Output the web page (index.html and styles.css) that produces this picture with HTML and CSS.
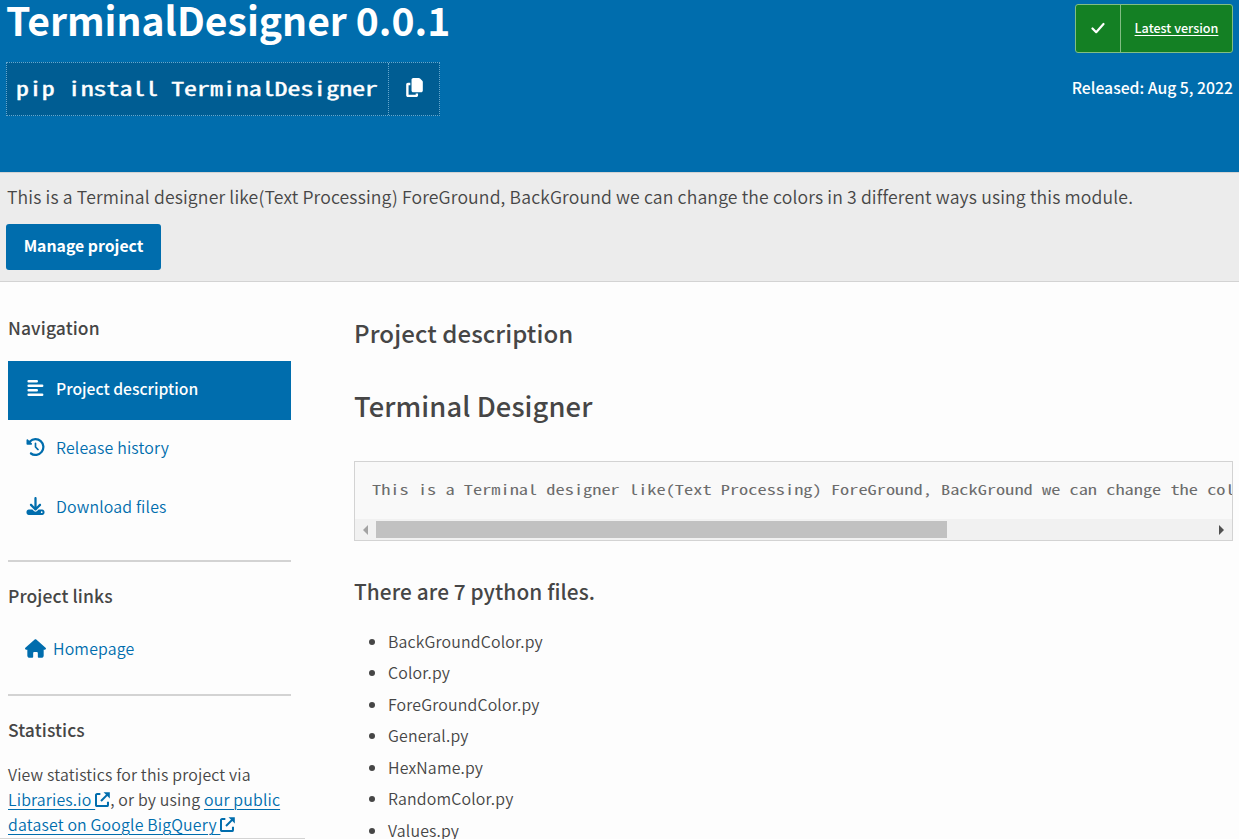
FILE: index.html
```html
<!DOCTYPE html>
<html lang="en">
<head>
<meta charset="utf-8">
<title>TerminalDesigner</title>
<link rel="stylesheet" href="styles.css">
</head>
<body>
<header class="banner">
  <div class="banner-main">
    <h1 class="package-name"><span>TerminalDesigner 0.0.1</span></h1>
    <div class="pip">
      <code class="pip-command"><span class="wide">pip install TerminalDesigner</span></code>
      <button class="pip-copy" aria-label="Copy">
        <svg class="icon-copy" viewBox="0 0 512 512"><path d="M224 0h147c13 0 25 5 34 14l61 61c9 9 14 21 14 34v227c0 27-21 48-48 48H224c-27 0-48-21-48-48V48c0-27 21-48 48-48zM80 128h64v64H96v256h192v-32h64v48c0 27-21 48-48 48H80c-27 0-48-21-48-48V176c0-27 21-48 48-48z"/></svg>
      </button>
    </div>
  </div>
  <div class="banner-side">
    <a class="status"><span class="status-check"><svg class="icon-check" viewBox="0 0 14 12"><path d="M1.5 6.5l3.7 3.7L12.5 2"/></svg></span><span class="status-label"><span>Latest version</span></span></a>
    <p class="released"><span>Released: Aug 5, 2022</span></p>
  </div>
</header>
<section class="summary">
  <p class="summary-text"><span>This is a Terminal designer like(Text Processing) ForeGround, BackGround we can change the colors in 3 different ways using this module.</span></p>
  <a class="manage"><span>Manage project</span></a>
</section>
<div class="content">
  <aside class="sidebar">
    <h2 class="side-title nav-title"><span>Navigation</span></h2>
    <nav class="tabs">
      <a class="tab tab-active"><svg class="icon" viewBox="0 0 20 20"><path class="stroke" d="M2.4 2.6h9M2.4 7.6h15M2.4 12.6h9M2.4 17.6h15"/></svg><span>Project description</span></a>
      <a class="tab"><svg class="icon" viewBox="0 0 512 512"><path d="M75 75L41 41C26 26 0 37 0 58v110c0 13 11 24 24 24h110c21 0 32-26 17-41l-31-31a192 192 0 1 1 26 293c-14-10-34-7-45 8s-7 34 8 45A256 256 0 1 0 75 75zm181 53c-13 0-24 11-24 24v104c0 6 3 13 7 17l72 72c9 9 25 9 34 0s9-25 0-34l-65-65v-94c0-13-11-24-24-24z"/></svg><span>Release history</span></a>
      <a class="tab"><svg class="icon" viewBox="0 0 512 512"><path d="M288 32c0-18-14-32-32-32s-32 14-32 32v243l-73-74c-13-12-33-12-46 0s-12 33 0 46l128 128c13 12 33 12 46 0l128-128c12-13 12-33 0-46s-33-12-46 0l-73 74V32zM64 352c-35 0-64 29-64 64v32c0 35 29 64 64 64h384c35 0 64-29 64-64v-32c0-35-29-64-64-64H346l-45 45a64 64 0 0 1-90 0l-45-45H64zm368 56a24 24 0 1 1 0 48 24 24 0 0 1 0-48z"/></svg><span>Download files</span></a>
    </nav>
    <hr class="rule">
    <h2 class="side-title"><span>Project links</span></h2>
    <a class="home"><svg class="icon-home" viewBox="0 0 576 512"><path d="M576 256c0 18-15 32-32 32h-32l1 160c0 36-28 64-64 64h-65c-18 0-32-14-32-32v-96c0-18-14-32-32-32h-64c-18 0-32 14-32 32v96c0 18-14 32-32 32h-64c-36 0-64-28-64-64V288H32c-18 0-32-14-32-32 0-9 3-17 10-24L266 8c7-7 15-8 22-8s15 2 21 7l255 225c8 7 12 15 12 24z"/></svg><span>Homepage</span></a>
    <hr class="rule">
    <h2 class="side-title"><span>Statistics</span></h2>
    <p class="stats">
      <span class="stats-line"><span>View statistics for this project via</span></span>
      <span class="stats-line"><a class="link">Libraries.io <svg class="icon-ext" viewBox="0 0 14 14"><path d="M5 1.9H1.9a1 1 0 0 0-1 1v9.2a1 1 0 0 0 1 1h9.2a1 1 0 0 0 1-1V9M5.6 8.4L12 2"/><path class="fill" d="M8 .2h5.8V6z"/></svg></a>, or by using <a class="link">our public</a></span>
      <span class="stats-line"><a class="link">dataset on Google BigQuery <svg class="icon-ext" viewBox="0 0 14 14"><path d="M5 1.9H1.9a1 1 0 0 0-1 1v9.2a1 1 0 0 0 1 1h9.2a1 1 0 0 0 1-1V9M5.6 8.4L12 2"/><path class="fill" d="M8 .2h5.8V6z"/></svg></a></span>
    </p>
  </aside>
  <main class="description">
    <h2 class="page-title"><span>Project description</span></h2>
    <h1 class="readme-title"><span>Terminal Designer</span></h1>
    <div class="code-box">
      <pre class="code"><span class="wide">This is a Terminal designer like(Text Processing) ForeGround, BackGround we can change the colors in 3 different ways</span></pre>
      <div class="scrollbar"><span class="arrow arrow-left"></span><span class="track"><span class="thumb"></span></span><span class="arrow arrow-right"></span></div>
    </div>
    <h2 class="files-title"><span>There are 7 python files.</span></h2>
    <ul class="files">
      <li>BackGroundColor.py</li>
      <li>Color.py</li>
      <li>ForeGroundColor.py</li>
      <li>General.py</li>
      <li>HexName.py</li>
      <li>RandomColor.py</li>
      <li>Values.py</li>
    </ul>
  </main>
</div>
<div class="statusbar"></div>
</body>
</html>
```
FILE: styles.css
```css
* { box-sizing: border-box; margin: 0; padding: 0; }
body {
  width: 1239px; height: 839px; overflow: hidden;
  background: #fdfdfd; color: #464646;
  font: 350 15.9px/25px "Noto Sans CJK SC", "Open Sans", sans-serif;
  letter-spacing: 0.16px;
  display: flex; flex-direction: column;
}
span { white-space: pre; }
svg { flex: none; fill: currentColor; }
.banner {
  height: 172px; flex: none; padding: 0 6px;
  background: #006dad; color: #fff; letter-spacing: 0;
  display: flex; justify-content: space-between;
}
.package-name { height: 62px; font-size: 39.1px; line-height: 39px; font-weight: 700; }
.pip {
  width: 434px; height: 54px; display: flex;
  background: #005d93; border: 1px dotted #66a7ce;
}
.pip-command {
  width: 382px; padding-left: 9px; border-right: 1px dotted #66a7ce;
  font: 400 19.3px/50px "Noto Sans Mono CJK SC", "DejaVu Sans Mono", monospace;
  -webkit-text-stroke: 0.4px #fff;
}
.wide { display: inline-block; transform: scaleX(1.341); transform-origin: 0 50%; }
.pip-copy { flex: 1; display: flex; align-items: center; justify-content: center; border: 0; background: none; color: #fff; }
.icon-copy { width: 19px; height: 19px; margin-bottom: 3px; }
.banner-side { display: flex; flex-direction: column; align-items: flex-end; padding-top: 4px; }
.status {
  width: 158px; height: 49px; display: flex;
  border: 1px solid #82bd83; border-radius: 3px; background: #148024;
}
.status-check { width: 45px; display: flex; align-items: center; justify-content: center; border-right: 1px solid #82bd83; }
.icon-check { width: 14px; height: 12px; margin-bottom: 2px; fill: none; stroke: #fff; stroke-width: 2.2; stroke-linecap: round; stroke-linejoin: round; }
.status-label { flex: 1; text-align: center; font-size: 12.6px; line-height: 46px; font-weight: 500; text-decoration: underline; text-underline-offset: 2px; }
.released { margin-top: 22px; font-size: 15.75px; font-weight: 500; }
.summary {
  height: 110px; flex: none; padding: 11px 6px 0;
  background: #ececec; border: solid #d3d3d3; border-width: 1px 0;
}
.summary-text { padding-left: 1px; font-size: 17.6px; letter-spacing: 0.148px; }
.manage {
  width: 155px; height: 46px; margin-top: 15px; border-radius: 3px;
  background: #006dad; color: #fff; font-size: 15.8px; font-weight: 700; letter-spacing: 0;
  display: flex; align-items: center; justify-content: center;
}
.manage span { padding-bottom: 4px; }
.content { display: flex; padding-left: 8px; gap: 63px; }
.sidebar { width: 283px; flex: none; }
.side-title { font-size: 17.5px; font-weight: 500; line-height: 26px; letter-spacing: 0.1px; }
.nav-title { margin-top: 33px; }
.tabs { margin-top: 20px; color: #006dad; }
.tab { height: 59px; padding: 0 18px; display: flex; align-items: center; gap: 11px; line-height: 54px; }
.tab span { padding-bottom: 3px; }
.tab-active { background: #006dad; color: #fff; font-size: 15.7px; font-weight: 500; letter-spacing: 0; }
.icon { width: 19px; height: 18px; margin-bottom: 5px; }
.stroke { stroke: #fff; stroke-width: 2.8; stroke-linecap: round; }
.rule { height: 2px; border: 0; background: #d3d3d3; margin: 22px 0 21px; }
.home { height: 46px; margin-top: 17px; padding-left: 17px; display: flex; align-items: center; gap: 7px; color: #006dad; }
.home span { padding-bottom: 1px; }
.icon-home { width: 21px; height: 19px; margin-bottom: 2px; }
.stats { margin-top: 19px; }
.stats-line { display: block; height: 25px; }
.link { color: #006dad; text-decoration: underline; text-decoration-thickness: 1px; text-underline-offset: 3px; }
.icon-ext { width: 15px; height: 15px; vertical-align: -1px; fill: none; stroke: currentColor; stroke-width: 1.9; }
.fill { fill: currentColor; stroke: none; }
.description { width: 879px; padding-top: 33px; }
.page-title { font-size: 24px; font-weight: 500; line-height: 36px; letter-spacing: 0.1px; }
.readme-title { margin-top: 34px; font-size: 27.3px; font-weight: 500; line-height: 40px; letter-spacing: 0.1px; }
.code-box { height: 80px; margin-top: 36px; border: 1px solid #d3d3d3; background: #f9f9f9; overflow: hidden; }
.code { height: 57px; padding-left: 17px; overflow: hidden; color: #6c6c6c; letter-spacing: 0; font: 400 13.7px/55px "Noto Sans Mono CJK SC", "DejaVu Sans Mono", monospace; }
.scrollbar { height: 21px; display: flex; align-items: center; justify-content: space-between; background: #f1f1f1; padding: 0 5px 0 8px; }
.track { flex: 1; padding-left: 8px; }
.thumb { display: block; width: 571px; height: 17px; background: #c1c1c1; }
.arrow { border: 5px solid transparent; }
.arrow-left { border-width: 5px 5px 5px 0; border-right-color: #a3a3a3; }
.arrow-right { border-width: 5px 0 5px 5px; border-left-color: #505050; margin-right: 3px; }
.files-title { margin-top: 34px; font-size: 20.8px; font-weight: 500; line-height: 32px; letter-spacing: 0.1px; }
.files { margin-top: 18.7px; padding-left: 34px; }
.files li { height: 31.5px; line-height: 31px; }
.statusbar { position: absolute; left: 0; top: 838px; width: 305px; height: 1px; background: #d3d3d3; }
```
